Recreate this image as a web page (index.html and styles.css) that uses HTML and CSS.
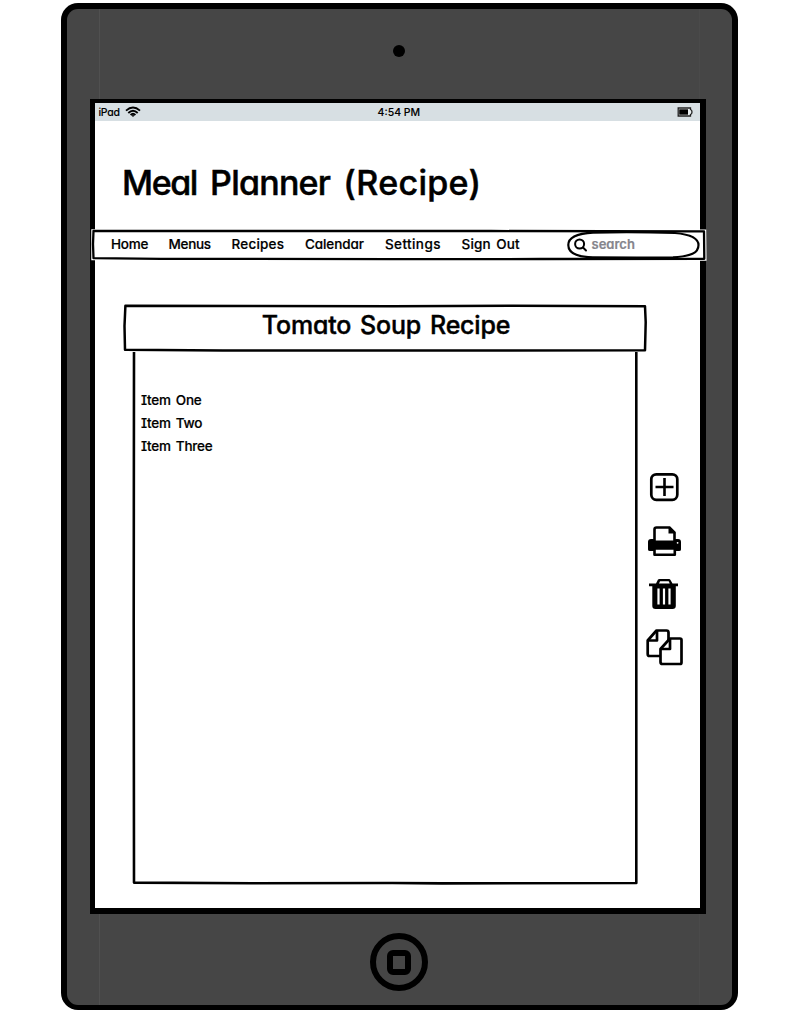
FILE: index.html
```
<!DOCTYPE html>
<html lang="en">
<head>
<meta charset="utf-8">
<title>Meal Planner (Recipe)</title>
<link rel="stylesheet" href="styles.css">
</head>
<body>
<div class="device">
  <div class="bezel">
    <div class="camera"></div>
    <div class="screen">
      <div class="status">
        <span class="carrier">iPad</span>
        <svg class="wifi" width="16" height="12" viewBox="0 0 16 12" fill="none" stroke="#000" stroke-width="1.900"><path d="M1 4.600Q8-1.400 15 4.600M3.300 7Q8 2.600 12.700 7M5.600 9Q8 6.600 10.400 9"/><path d="M6.500 9.600L8 11L9.500 9.600Q8 8.300 6.500 9.600Z" fill="#000" stroke="none"/></svg>
        <span class="time">4:54 PM</span>
        <svg class="battery" width="16" height="10" viewBox="0 0 16 10"><path d="M1.200 1H13.500V2.500Q15 3 15 5T13.500 7.500V9H1.200Z" fill="#e8edef" stroke="#222" stroke-width="1.300"/><path d="M2.200 2.300H11V7.700H2.200Z"/></svg>
      </div>
      <h1 class="title"><span class="w1">Meal</span> <span class="w2">Planner</span> <span class="w3">(Recipe)</span></h1>
      <nav class="nav">
        <svg class="sketch" width="616" height="34" viewBox="0 0 616 34" fill="none"><path d="M2 3L120 2.700L400 3L613.500 3.300L613.800 31L300 31.300L2 30.500Z" fill="#fff" stroke="#fff" stroke-width="3.500"/><path d="M2.500 2.800L120 3L400 3L613 3.300L613.300 30.800L450 31L300 31.200L70 30.800L2.500 30.200L2 16Z" stroke="#000" stroke-width="2.300" stroke-linejoin="round"/></svg>
        <a class="link home">Home</a><a class="link menus">Menus</a><a class="link recipes">Recipes</a><a class="link calendar">Calendar</a><a class="link settings">Settings</a><a class="link signout">Sign Out</a>
        <div class="search">
          <svg class="sketch" width="134" height="28" viewBox="0 0 134 28" fill="none" stroke="#000" stroke-width="2.200"><path d="M26 1.600Q65 .5 108 2C125 3.500 131.500 8 131.500 14C131.500 22 124 25.500 106 26.300L70 26.500L26 26.300C9 26 1.300 21 1.300 14C1.300 7 8 2.500 26 1.600Z" fill="#fff"/></svg>
          <svg class="lens" width="14" height="14" viewBox="0 0 14 14" fill="none" stroke="#000" stroke-width="2" stroke-linecap="round"><circle cx="5.600" cy="6" r="4.500"/><path d="M9 9.500L12 12.500"/></svg>
          <span class="placeholder">search</span>
        </div>
      </nav>
      <main class="content">
        <section class="recipe">
          <h2 class="recipe-title">
            <svg class="sketch" width="524" height="48" viewBox="0 0 524 48" fill="none" stroke="#000" stroke-width="2.500" stroke-linejoin="round"><path d="M2.400 1.700L130 1.900L270 2.300L390 1.800L522 2.300L522.700 18L522 46.200L380 46.500L180 46.400L100 46.500L2 45.800L1.500 22Z"/></svg>
            <span>Tomato Soup Recipe</span>
          </h2>
          <div class="panel">
            <svg class="sketch" width="506" height="534" viewBox="0 0 506 534" fill="none" stroke="#000" stroke-width="2.600" stroke-linejoin="round"><path d="M2 1L1.700 270L2 531.600L120 532.300L260 532L310 532.400L504.300 532L504.300 270L504.300 1"/></svg>
            <ul class="items"><li>Item One</li><li>Item Two</li><li>Item Three</li></ul>
          </div>
        </section>
        <aside class="tools">
          <svg width="38" height="30" viewBox="0 0 38 30" fill="none" stroke="#000"><rect x="5.300" y="2.300" width="26" height="25.500" rx="5" stroke-width="2.700"/><path d="M9.500 15H27.500M18.500 6V24" stroke-width="2.600"/></svg>
          <svg width="38" height="32" viewBox="0 0 38 32"><path d="M8.500 16V4.500Q8.500 2.500 10.500 2.500H23.500L28.500 7.500V16" fill="#fff" stroke="#000" stroke-width="2.600"/><path d="M22.500 2V8.500H29.500Z"/><path d="M2 24.500V17Q2 14 5 14H8V15.500H29V14H32Q35 14 35 17V24.500Q35 26 33 26H4Q2 26 2 24.500Z"/><path d="M8.500 23.500H28.800V29.800H8.500Z" fill="#fff" stroke="#000" stroke-width="2.600" stroke-linejoin="round"/><circle cx="31.600" cy="17.800" r=".9" fill="#fff"/></svg>
          <svg width="38" height="32" viewBox="0 0 38 32"><path d="M3 5.500H10L12 1.500Q12.400 1 13.500 1H23Q24 1 24.500 2L26.500 5.500H32V8.300H29.800V28Q29.800 31 26.500 31H9.500Q6.300 31 6.300 28V8.300H3Z"/><path d="M13 5.500L14 3.300H22.700L23.700 5.500Z" fill="#fff"/><path d="M12.500 10.500V26.500M18 10.500V26.500M23.500 10.500V26.500" stroke="#fff" stroke-width="2.200"/></svg>
          <svg width="38" height="38" viewBox="0 0 38 38" fill="#fff" stroke="#000" stroke-width="2.700" stroke-linejoin="round"><path d="M10.500 2.500H20.500Q22.500 2.500 22.500 4.500V28H3.500Q1.700 28 1.700 26V12.500Z"/><path d="M2 12.500H11V3" fill="none"/><path d="M24 10.500H34Q35.500 10.500 35.500 12V34.500Q35.500 36 34 36H16.500Q14.500 36 14.500 34V21Z"/><path d="M15 21H24V11" fill="none"/></svg>
        </aside>
      </main>
    </div>
    <div class="home-button"><div class="home-square"></div></div>
  </div>
</div>
</body>
</html>
```
FILE: styles.css
```
* { box-sizing: border-box; }
body {
  margin: 0;
  width: 802px;
  height: 1020px;
  overflow: hidden;
  background: #fff;
  color: #000;
  font-family: Inter, "Noto Sans", sans-serif;
  font-feature-settings: "cv11", "cv08";
  display: flex;
  padding: 3px 0 0 61px;
}
.device {
  width: 676.5px;
  height: 1007px;
  padding: 5.5px;
  border-radius: 17px;
  background: #000;
}
.bezel {
  position: relative;
  height: 996px;
  border-radius: 11px;
  background: #464646;
  display: flex;
  flex-direction: column;
  align-items: flex-start;
}
/* faint seams running down the casing */
.bezel::before {
  content: "";
  position: absolute;
  left: 32px;
  top: 0;
  width: 599px;
  height: 996px;
  border: solid #505050;
  border-width: 0 1px;
  border-right-color: #4a4a4a;
}
.camera {
  width: 12px;
  height: 12px;
  margin: 36.500px 0 0 326.500px;
  border-radius: 50%;
  background: #000;
}
.screen {
  position: relative;
  width: 615.500px;
  height: 815px;
  margin: 42px 0 0 23.500px;
  padding: 4px 5.500px 6px 5px;
  background: linear-gradient(#fff, #fff) content-box, #000;
}
.status {
  display: flex;
  align-items: center;
  height: 18px;
  padding: 0 7px 0 3.500px;
  background: #d7dfe3;
  font-size: 10.500px;
  font-weight: 500;
  -webkit-text-stroke: .1px #000;
}
.carrier { letter-spacing: -.3px; }
.wifi { margin-left: 5.500px; }
.time { margin-left: 236.500px; }
.battery { margin-left: auto; }
.title {
  height: 107px;
  margin: 0;
  padding: 38px 0 0 27px;
  font-size: 34px;
  line-height: 48px;
  font-weight: 500;
  white-space: nowrap;
  word-spacing: 4px;
  -webkit-text-stroke: .5px #000;
}
.w1 { letter-spacing: -1.400px; }
.w2 { letter-spacing: -.75px; }
.w3 { letter-spacing: .3px; }
.sketch { position: absolute; left: 0; top: 0; }
.nav {
  position: relative;
  display: flex;
  align-items: center;
  width: 616px;
  height: 34px;
  margin-left: -4px;
  padding-left: 20px;
  font-size: 13.500px;
  font-weight: 500;
  -webkit-text-stroke: .2px;
}
.link { position: relative; white-space: nowrap; top: -1px; }
.home { width: 57.500px; letter-spacing: -.2px; }
.menus { width: 63px; letter-spacing: -.3px; }
.recipes { width: 73.500px; letter-spacing: .2px; }
.calendar { width: 80px; letter-spacing: -.1px; }
.settings { width: 76.500px; letter-spacing: .4px; }
.signout { width: 105.500px; letter-spacing: .2px; word-spacing: 1.500px; }
.search {
  position: relative;
  display: flex;
  align-items: center;
  width: 134px;
  height: 28px;
  padding-left: 7px;
}
.lens { position: relative; }
.placeholder {
  position: relative;
  margin: -2px 0 0 3.500px;
  color: #85858c;
  font-weight: 600;
  font-size: 13px;
}
.content { display: flex; }
.recipe { margin: 42px 0 0 28px; width: 524px; }
.recipe-title {
  position: relative;
  height: 48px;
  margin: 0;
  padding: 4px 0 0 2px;
  text-align: center;
  font-size: 25px;
  line-height: 34px;
  font-weight: 500;
  letter-spacing: -.2px;
  word-spacing: 2.500px;
  -webkit-text-stroke: .4px #000;
}
.panel {
  position: relative;
  width: 506px;
  height: 534px;
  margin-left: 9px;
  margin-top: -1px;
}
.items {
  list-style: none;
  margin: 0;
  padding: 38px 0 0 9px;
  font-size: 13.500px;
  line-height: 23px;
  font-weight: 500;
  letter-spacing: -.2px;
  word-spacing: 1.500px;
  -webkit-text-stroke: .2px #000;
}
.tools {
  display: flex;
  flex-direction: column;
  width: 38px;
  margin: 210px 0 0 -1px;
}
.tools svg:nth-child(2) { margin-top: 23px; }
.tools svg:nth-child(3) { margin-top: 21px; }
.tools svg:nth-child(4) { margin-top: 18px; }
.home-button {
  display: flex;
  align-items: center;
  justify-content: center;
  width: 58px;
  height: 58px;
  margin: 19px 0 0 303.500px;
  border: 6px solid #000;
  border-radius: 50%;
}
.home-square {
  width: 24px;
  height: 25px;
  border: 6px solid #000;
  border-radius: 6px;
}
```
